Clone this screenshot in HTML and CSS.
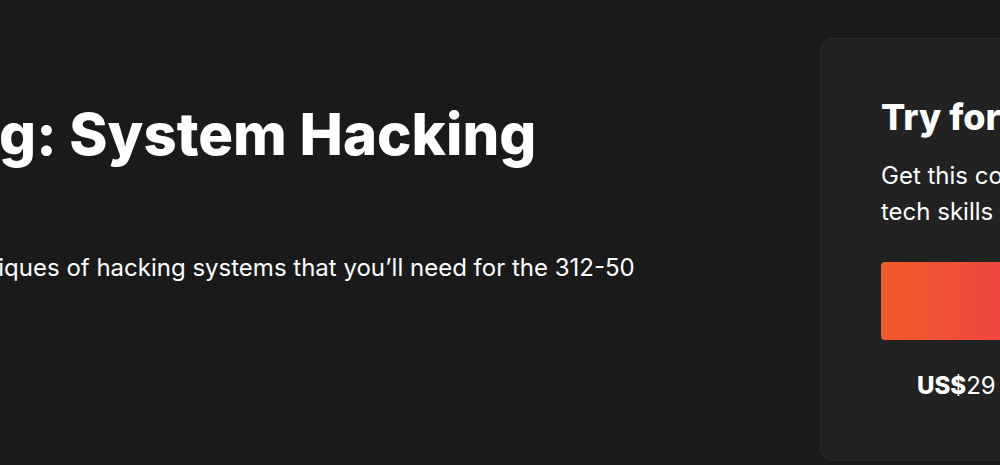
FILE: index.html
```html
<!DOCTYPE html>
<html lang="en">
<head>
<meta charset="utf-8">
<title>Ethical Hacking: System Hacking</title>
<link rel="stylesheet" href="styles.css">
</head>
<body>
<div class="page">
  <main class="main">
    <h1 class="title">Ethical Hacking: System Hacking</h1>
    <p class="desc">This course will teach you the techniques of hacking systems that you’ll need for the 312-50 exam.</p>
  </main>
  <aside class="card">
    <h2 class="card-title">Try for free</h2>
    <p class="card-text">Get this course, plus top-rated picks in<br>tech skills and other popular topics.</p>
    <button class="cta" type="button"><span class="cta-label">Start free trial</span></button>
    <p class="price"><strong>US$</strong>29 <span class="price-note">per month after 10 day trial</span></p>
  </aside>
</div>
</body>
</html>
```

FILE: styles.css
```css
html, body {
  margin: 0;
  padding: 0;
}

body {
  background: #1a1a1a;
  color: #ffffff;
  font-family: Inter, "Noto Sans", sans-serif;
  overflow: hidden;
  height: 465px;
}

.page {
  display: flex;
  align-items: flex-start;
  width: 1740px;
  margin-left: -410px;
}

.main {
  flex: none;
  width: 1050px;
  padding-top: 100px;
}

.title {
  margin: 0 0 82px;
  font-size: 58px;
  line-height: 1.2;
  font-weight: 800;
  letter-spacing: 0;
}

.desc {
  margin: 0;
  font-size: 24px;
  line-height: 32px;
  font-weight: 400;
}

.card {
  flex: none;
  box-sizing: border-box;
  width: 620px;
  height: 423px;
  margin-top: 38px;
  margin-left: 180px;
  padding: 56px 60px 0;
  background: #222222;
  border: 1px solid #2a2a2a;
  border-radius: 12px;
}

.card-title {
  margin: 0;
  font-size: 36px;
  line-height: 44px;
  font-weight: 800;
}

.card-text {
  margin: 19px 0 0;
  font-size: 24px;
  line-height: 36px;
  font-weight: 400;
}

.cta {
  display: flex;
  align-items: center;
  justify-content: center;
  width: 500px;
  height: 78px;
  margin-top: 32px;
  border: 0;
  border-radius: 4px;
  background: linear-gradient(90deg, #f15b2a 0%, #e80a89 100%);
  color: #ffffff;
  font-family: inherit;
  font-size: 20px;
  font-weight: 700;
}

.cta-label {
  padding-left: 260px;
}

.price {
  margin: 32px 0 0;
  padding-left: 36px;
  font-size: 24px;
  line-height: 28px;
  white-space: nowrap;
}

.price strong {
  font-weight: 800;
}

.price-note {
  margin-left: 4px;
}
```
